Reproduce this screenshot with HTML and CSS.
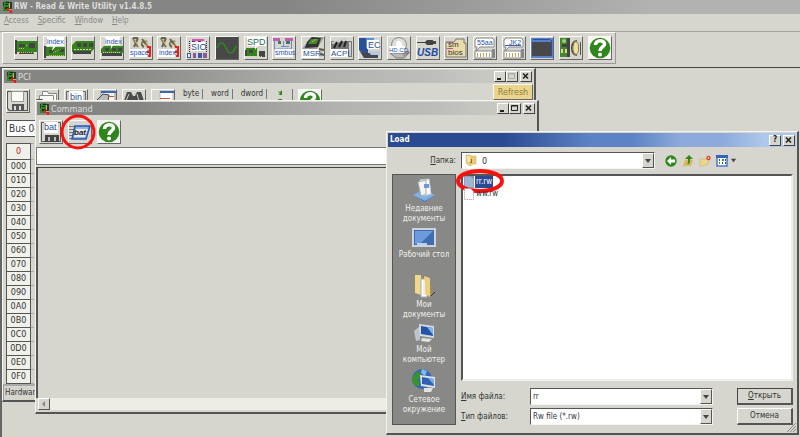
FILE: index.html
```html
<!DOCTYPE html>
<html lang="ru">
<head>
<meta charset="utf-8">
<title>RW - Read &amp; Write Utility v1.4.8.5</title>
<link rel="stylesheet" href="styles.css">
</head>
<body>
<svg class="defs" aria-hidden="true">
  <symbol id="app" viewBox="0 0 12 12"><path fill="#333" d="M1 1h9v9H1z"/><path fill="#2d8a1c" d="M2 0h5v6H2zM1 5h4v5H1z"/><path fill="#222" d="M4 1h3v1H4zM3 3h3v1H3zM3 6h2v2H3z"/><path fill="#c9b45c" d="M7 2h1v5H7zM5 8h5v1H5z"/><path fill="#e02018" d="M5 7h2v2h3v3H8v-2H5z"/></symbol>
  <symbol id="card" viewBox="0 0 22 22"><path fill="#33841c" d="M2 4h20v11H2z"/><path fill="#444" d="M0 3h2v14H0zM4 7h6v3H4zM14 6h6v5h-6zM4 15h15v2H4z"/><path stroke="#c9c060" stroke-dasharray="1 1" d="M4 15.500h15M11 8.500h2M4 11.500h6"/></symbol>
  <symbol id="cardidx" viewBox="0 0 22 22"><path fill="#33841c" d="M1 10h20v9H1z"/><path fill="#444" d="M0 9h2v12H0zM5 13h5v3H5zM15 12h5v3h-5z"/><path fill="#fff" d="M3 0h17v9h-8l-4 5 1-5H3z"/><path stroke="#c9c060" stroke-dasharray="1 1" d="M5 18.500h15M9 15.500l8-3"/><text x="3" y="7">index</text></symbol>
  <symbol id="mem" viewBox="0 0 22 22"><path fill="#33841c" d="M4 4h18v8l-3 3H0V8z"/><path fill="#444" d="M5 6h4v4H5zm6 0h4v4h-4zm6 0h4v4h-4zM1 14h18v3H1z"/><path stroke="#d9d5a0" stroke-dasharray="2 1" d="M2 12.500h17"/></symbol>
  <symbol id="memidx" viewBox="0 0 22 22"><path fill="#33841c" d="M3 9h19v7H0v-4z"/><path fill="#444" d="M4 11h4v3H4zm7 0h4v3h-4zm6 0h4v3h-4zM1 16h20v3H1z"/><path stroke="#d9d5a0" stroke-dasharray="1 1" d="M2 15.500h18"/><path fill="#fff" d="M4 0h15v8h-7l-2 4V8H4z"/><text x="4" y="7">index</text></symbol>
  <symbol id="iospace" viewBox="0 0 22 22"><path fill="none" stroke="#6a6550" stroke-width="2" d="M3 1l5 9M8 1l-4 9M3 1h5M12 2l6 8m-4 0a3 3 0 1 1 3-5"/><path fill="none" stroke="#d9c26a" d="M4 2l5 8M12 6l5 3M14 2l4 5"/><path fill="#fff" d="M0 12h17v8H0z"/><path fill="none" stroke="#e82018" stroke-width="2" d="M17 10h3v4l-3 1h3v4h-2"/><text x="0" y="18">space</text></symbol>
  <symbol id="ioindex" viewBox="0 0 22 22"><path fill="none" stroke="#6a6550" stroke-width="2" d="M3 1l5 9M8 1l-4 9M3 1h5M12 2l6 8m-4 0a3 3 0 1 1 3-5"/><path fill="none" stroke="#d9c26a" d="M4 2l5 8M12 6l5 3M14 2l4 5"/><path fill="#fff" d="M0 12h17v8H0z"/><path fill="none" stroke="#e82018" stroke-width="2" d="M17 10h3v4l-3 1h3v4h-2"/><text x="1" y="18">index</text></symbol>
  <symbol id="sio" viewBox="0 0 22 22"><path fill="#c85ab4" d="M5 2h12v2H5z"/><path fill="#6a2a50" d="M5 4h3v1H5zm6 0h3v1h-3z"/><path fill="#fff" d="M4 5h14v9H4z"/><path stroke="#333" stroke-dasharray="1 1" d="M2.500 4v11M19.500 4v11"/><path fill="#3c5aa8" d="M0 16h4v5H0zm11 0h4v5h-4z"/><path fill="#8a5a98" d="M6 16h3v5H6zm10 0h4v5h-4z"/><path fill="#eee" d="M1 17h2v3H1z"/><text class="big" x="4" y="13">SIO</text></symbol>
  <symbol id="wave" viewBox="0 0 22 22"><path fill="#484848" d="M0 0h22v22H0z"/><path fill="none" stroke="#2f8a22" stroke-width="1.500" d="M1 11C4 4 7 4 10 11s7 7 10-2"/></symbol>
  <symbol id="spd" viewBox="0 0 22 22"><path fill="#33841c" d="M1 11h11v8H1z"/><path fill="#444" d="M0 13h2v6H0zM4 13h4v3H4zM14 14h6v6h-6z"/><path stroke="#d9d5a0" stroke-dasharray="1 1" d="M2 19.500h16"/><path fill="#fff" d="M2 0h19v9h-9l-2 4V9H2z"/><text class="big green" x="2" y="8">SPD</text></symbol>
  <symbol id="smbus" viewBox="0 0 22 22"><path fill="#c85ab4" d="M0 1h7v3H0zm12 0h8v3h-8z"/><path fill="#3d7c58" d="M5 4h3v3H5zm8 0h4v3h-4z"/><path fill="none" stroke="#6c8ccc" d="M1.500 4v8h17V4M8 9.500h8M10.500 4v6"/><path fill="#fff" d="M2 12h18v8H2z"/><text x="2" y="18">smbus</text></symbol>
  <symbol id="msr" viewBox="0 0 22 22"><path fill="#999" d="M9 0h13l-7 12H0z"/><path fill="#333" d="M5 5l5-5 9 1-3 9-13 1z"/><path fill="#458c2c" d="M9 2h8l-3 5H6z"/><path stroke="#b4b060" d="M10 5l4-3M17 12l4 5"/><path fill="#fff" d="M0 12h17v9H0z"/><path stroke="#555" stroke-width="2" d="M17 12l5 1M18 17l4 1"/><text class="big sm" x="1" y="19">MSR</text></symbol>
  <symbol id="acpi" viewBox="0 0 22 22"><path fill="#777" d="M0 4h21v16H0z"/><path fill="#ccc" d="M1 5l13-4 2 3-15 3zM18 5h2v14h-2z"/><path stroke="#222" stroke-width="2" d="M3 11l3-6m2 5l3-6m2 6l2-6"/><path fill="#fff" d="M0 12h17v8H0z"/><text class="big sm" x="0" y="19">ACPI</text></symbol>
  <symbol id="ec" viewBox="0 0 22 22"><path fill="#2c5098" d="M0 1h9v18l-9-6z"/><path fill="#5e91d0" d="M7 1h8v10H7z"/><path fill="#434850" d="M0 13c4 4 10 3 19 3v5H5z"/><path fill="#fff" d="M8 3h12v9H8z"/><path fill="#b8c8db" d="M9 14h12v4H12z"/><text class="big" x="9" y="11">EC</text></symbol>
  <symbol id="hdcd" viewBox="0 0 22 22"><circle cx="11" cy="8" r="7.500" fill="#ddd" stroke="#888"/><circle cx="11" cy="7" r="3" fill="#fff"/><path fill="#bbb" stroke="#777" d="M2 16l6 5h8l5-5z"/><path fill="#fff" d="M1 9h16v7H1z"/><path stroke="#777" d="M14 17l7-3m-6 5l7-4"/><text class="tinyt" x="1" y="15">HD,CD</text></symbol>
  <symbol id="usb" viewBox="0 0 22 22"><path fill="#444" d="M0 5h8l2-2h6v1h3v3h-3v1h-6L8 6H0z"/><text class="usbt" x="0" y="19">USB</text></symbol>
  <symbol id="smbios" viewBox="0 0 22 22"><path fill="#e9dca9" stroke="#777" d="M1 5h8l2-3h8v4h2v14H1z"/><path stroke="#b5588f" d="M2 5.500h6M2 11.500h6"/><text class="blk" x="3" y="10">sm</text><text class="blk" x="3" y="18">bios</text></symbol>
  <symbol id="s55" viewBox="0 0 22 22"><path fill="#fff" stroke="#888" d="M3 1h15l2 2v7H6l-4 4 1-4H1V3z"/><path fill="#fff" stroke="#888" d="M1 14h17v7H1z"/><path stroke="#bba55c" stroke-width="4" stroke-dasharray="1 2" d="M3 18h15"/><path fill="#888" d="M18 12h3v9h-3z"/><text x="3" y="8">55aa</text></symbol>
  <symbol id="s12" viewBox="0 0 22 22"><path fill="#fff" stroke="#888" d="M3 1h15l2 2v7H6l-4 4 1-4H1V3z"/><path fill="#fff" stroke="#888" d="M1 14h17v7H1z"/><path stroke="#bba55c" stroke-width="4" stroke-dasharray="1 2" d="M3 18h15"/><path fill="#888" d="M18 12h3v9h-3z"/><path stroke="#3c62b0" d="M2 8.500h16"/><text x="6" y="8">JK2</text></symbol>
  <symbol id="screen" viewBox="0 0 22 22"><path fill="#5481ca" d="M0 1h22v20H0z"/><path fill="#2c50a0" d="M2 2h17v1H2zm18 1h1v16h-1z"/><path fill="#484848" d="M1 5h19v14H1z"/></symbol>
  <symbol id="board" viewBox="0 0 22 22"><path fill="#45872c" d="M0 1h7v19H0z"/><path fill="#444" d="M7 1h3v19H7zM2 7h5v3H2z"/><path fill="#ded586" d="M1 12h2v4H1zm4 0h2v4H5z"/><circle cx="4" cy="4" r="2" fill="#9ed080"/><path fill="none" stroke="#444" stroke-width="1.500" d="M17 4c-7-1-7 15 0 14"/><path fill="#eee1a0" stroke="#8c7b3f" d="M14.500 5c3-1 4 1 4 6s-1 7-4 6c-2-4-2-8 0-12z"/><path stroke="#555" d="M20.500 5v13"/></symbol>
  <symbol id="help" viewBox="0 0 22 22"><path fill="#f5f5f2" d="M0 0h22v22H0z"/><circle cx="11" cy="11" r="10.300" fill="#2f861c"/><path fill="none" stroke="#fff" stroke-width="3.600" d="M6.500 8c0-5.500 9-5.500 9-1 0 3-4.500 3-4.500 7"/><circle cx="11" cy="17.500" r="2" fill="#fff"/></symbol>
  <symbol id="disk" viewBox="0 0 22 22"><path fill="#555" d="M0 1h21v20H2l-2-2z"/><path fill="#d7d7cf" d="M1 2h19v18H3l-2-2z"/><path fill="#fafaf8" stroke="#999" d="M4.500 1.500h12v10h-12z"/><path fill="#555" d="M5 14h12v7H5z"/><path fill="#ddd" d="M7 16h2v4H7zm5 0h2v4h-2z"/></symbol>
  <symbol id="folders" viewBox="0 0 22 22"><path fill="#f8f8f5" stroke="#888" d="M6.500 1.500h5l1 2h8v12h-14z"/><path fill="#f8f8f5" stroke="#888" d="M3.500 5.500h14v13h-14z"/><path fill="#e4e4de" stroke="#555" d="M.500 9.500h6l1 2h7v9h-14z"/></symbol>
  <symbol id="bin" viewBox="0 0 22 22"><path fill="#ccc" stroke="#666" d="M1.500 1.500h19v19h-19z"/><path fill="#fff" d="M4 1h14v11H4z"/><text class="big" x="5" y="10">bin</text></symbol>
  <symbol id="bat" viewBox="0 0 22 22"><path fill="#d7d7cf" stroke="#555" d="M1.500 1.500h19v19h-19z"/><path fill="#fff" d="M4 1h14v11H4z"/><path fill="#444" d="M5 14h14v7H5z"/><path fill="#bbb" d="M8 16h2v4H8zm6 0h2v4h-2z"/><text class="big" x="4" y="9">bat</text></symbol>
  <symbol id="probe" viewBox="0 0 22 22"><path fill="#f5f5f5" stroke="#999" d="M7 1h14v16H7z"/><path fill="#3c65b4" d="M7 1h15v2H7z"/><path fill="#bbb" stroke="#444" d="M1 12l8-8 6 1-1 6-4 1-4-1-4 5z"/><path stroke="#bf5a30" d="M15 6.500h5"/></symbol>
  <symbol id="find" viewBox="0 0 22 22"><path fill="#4b4b4b" d="M4 2h4l2 4h2l2-4h4l4 12h-9v-3h-4v3H0z"/><path stroke="#ccc" d="M6 4l-3 7M14 4l2 7"/></symbol>
  <symbol id="split" viewBox="0 0 22 22"><path fill="#fff" stroke="#bbb" d="M8 1h13v18H8z"/><path fill="#3c65b4" d="M8 1h14v2H8zM0 10h20v2H0z"/><path stroke="#bf5a30" d="M8 8.500h10"/></symbol>
  <symbol id="run" viewBox="0 0 22 22"><path stroke="#777" d="M0 5.500h6M0 8.500h5M0 11.500h5M0 14.500h4M0 17.500h6"/><path fill="#93b4e3" stroke="#2d57a4" stroke-width="1.500" d="M6 5h15l-4 13H3z"/><path fill="#e7ecf4" d="M7 8h12l-3 8H5z"/><text class="runt" x="5" y="14">bat</text></symbol>
  <symbol id="docs" viewBox="0 0 24 24"><path fill="#7fb0e8" d="M1 17l9-5 13 5-10 7z"/><path fill="#3e70b8" d="M1 17l12 6 10-6-10 7z"/><path fill="#fafafa" stroke="#c4cfdd" d="M8 2l9-1 2 15-9 2z"/><path fill="#f2f4f8" stroke="#aaa" d="M6 4l8-2v14l-5 2z"/><path fill="#6a9bd8" d="M12 6h5v4h-5z"/></symbol>
  <symbol id="desk" viewBox="0 0 24 20"><path fill="#416caf" stroke="#ccd4da" stroke-width="2" d="M1 1h22v17H1z"/><path fill="#6c9ade" d="M3 3h18L8 16H3z"/><path fill="#b5d2f4" d="M5 15h10v2H5z"/></symbol>
  <symbol id="mydocs" viewBox="0 0 24 24"><path fill="#b59035" d="M17 3l3 17-5 3z"/><path fill="#f0d88a" d="M3 1h6v20l-6-2z"/><path fill="#fff" stroke="#aaa" d="M9 5h6v18H9z"/><path fill="#ecd081" d="M12 2l6 2v19l-5-3z"/><path stroke="#eee" stroke-width="2" d="M12 7v14"/><path stroke="#333" d="M19 22l4-4"/></symbol>
  <symbol id="pc" viewBox="0 0 24 20"><path fill="#bcc4cc" d="M2 8l6-5v14l-4 1z"/><path fill="#d4dbe4" d="M7 1l15 2v12L8 13z"/><path fill="#2452a4" d="M9 3l12 2v8L9 11z"/><path fill="#7eb4ef" d="M15 4l6 1v7z"/><path fill="#e3e3e0" d="M10 15l10 1-3 3-8-1z"/></symbol>
  <symbol id="net" viewBox="0 0 24 24"><circle cx="10" cy="10" r="10" fill="#3569b8"/><path fill="#37942b" d="M1 7l5-5 3 4-3 5 2 4-4 3-4-6z"/><path fill="#83b9eb" d="M10 0l5 2-2 5-4-3z"/><path fill="#dce4eb" d="M8 6l15 2v11L9 17z"/><path fill="#2e61b3" d="M10 8l12 2v7l-12-2z"/><path fill="#79aeea" d="M16 9l6 1v6z"/><path fill="#e3e3e0" d="M12 19h9l-2 4h-7z"/></symbol>
  <symbol id="folder" viewBox="0 0 12 12"><path fill="#e9cc79" stroke="#c9a850" stroke-width=".5" d="M1 1h4l1 1h5v8H8l-3 2-4-3z"/><path fill="#f5e5aa" d="M2 2h3v6H2z"/><path fill="#8f6b1c" d="M6 5h1v4H5V8h1z"/></symbol>
  <symbol id="back" viewBox="0 0 12 12"><circle cx="6" cy="6" r="5.700" fill="#2f861c"/><path fill="#fff" d="M2 6l4-4v2.500h4v3H6V10z"/></symbol>
  <symbol id="up" viewBox="0 0 12 12"><path fill="#ecd58c" d="M1 4h10L9 11H1z"/><path fill="#bd9b46" d="M1 11l2-6h8l-2 6z" opacity=".5"/><path fill="#2f861c" d="M7 0l4 4H8c0 4 0 5-3 5 2-2 1-3 1-5H3z"/></symbol>
  <symbol id="newf" viewBox="0 0 12 12"><path fill="#ecd58c" stroke="#c7aa60" stroke-width=".5" d="M1 4h9l-1 5-6 2H1z"/><circle cx="9.500" cy="3" r="2.200" fill="#d44a24"/><circle cx="9.500" cy="3" r=".8" fill="#fff"/></symbol>
  <symbol id="views" viewBox="0 0 12 12"><path fill="#fff" stroke="#4d7acb" stroke-width="1.500" d="M1 1h10v10H1z"/><path fill="#3764bd" d="M0 0h12v3H0z"/><path fill="#37942b" d="M6 4h2v2H6zM3 7h1v2H3z"/><path fill="#2b4f9d" d="M3 4h1v2H3zm6 0h1v2H9zM6 7h1v2H6zm3 0h1v2H9z"/></symbol>
  <symbol id="file" viewBox="0 0 10 12"><path fill="#fff" stroke="#999" stroke-dasharray="1 1" d="M.5.500h6l3 3v8h-9z"/></symbol>
  <symbol id="min" viewBox="0 0 10 9"><path fill="#222" d="M2 6h4v2H2z"/></symbol>
  <symbol id="max" viewBox="0 0 10 9"><path fill="none" stroke="currentColor" d="M1.500 1.500h6v5h-6zM1 2h7"/></symbol>
  <symbol id="close" viewBox="0 0 10 9"><path stroke="#222" stroke-width="1.600" d="M2 1.500l5 5M7 1.500l-5 5"/></symbol>
  <symbol id="arrow" viewBox="0 0 8 8"><path fill="#444" d="M1 2h6L4 6z"/></symbol>
</svg>

<header class="titlebar main-title"><svg class="appicon"><use href="#app"/></svg><h1>RW - Read &amp; Write Utility v1.4.8.5</h1></header>
<nav class="menu"><a href="#"><u>A</u>ccess</a><a href="#"><u>S</u>pecific</a><a href="#"><u>W</u>indow</a><a href="#"><u>H</u>elp</a></nav>
<div class="toolrow">
  <div class="toolbar">
    <button aria-label="PCI"><svg><use href="#card"/></svg></button>
    <button aria-label="PCI index"><svg><use href="#cardidx"/></svg></button>
    <button aria-label="Memory"><svg><use href="#mem"/></svg></button>
    <button aria-label="Memory index"><svg><use href="#memidx"/></svg></button>
    <button aria-label="IO space"><svg><use href="#iospace"/></svg></button>
    <button aria-label="IO index"><svg><use href="#ioindex"/></svg></button>
    <button aria-label="Super IO"><svg><use href="#sio"/></svg></button>
    <button aria-label="Clock"><svg><use href="#wave"/></svg></button>
    <button aria-label="SPD"><svg><use href="#spd"/></svg></button>
    <button aria-label="SMBus"><svg><use href="#smbus"/></svg></button>
    <button aria-label="MSR"><svg><use href="#msr"/></svg></button>
    <button aria-label="ACPI"><svg><use href="#acpi"/></svg></button>
    <button aria-label="EC"><svg><use href="#ec"/></svg></button>
    <button aria-label="Drives"><svg><use href="#hdcd"/></svg></button>
    <button aria-label="USB"><svg><use href="#usb"/></svg></button>
    <button aria-label="SMBIOS"><svg><use href="#smbios"/></svg></button>
    <button aria-label="Boot sector"><svg><use href="#s55"/></svg></button>
    <button aria-label="Strings"><svg><use href="#s12"/></svg></button>
    <button aria-label="Command"><svg><use href="#screen"/></svg></button>
    <button aria-label="Remote"><svg><use href="#board"/></svg></button>
    <button aria-label="Help"><svg><use href="#help"/></svg></button>
  </div>
</div>

<main class="desktop">
  <section class="window pci">
    <div class="titlebar"><svg class="appicon"><use href="#app"/></svg><h2>PCI</h2>
      <div class="caps"><button aria-label="Minimize"><svg><use href="#min"/></svg></button><button class="off" aria-label="Maximize"><svg><use href="#max"/></svg></button><button class="x" aria-label="Close"><svg><use href="#close"/></svg></button></div></div>
    <div class="tools">
      <button aria-label="Save"><svg><use href="#disk"/></svg></button>
      <button aria-label="Open"><svg><use href="#folders"/></svg></button>
      <button aria-label="Binary"><svg><use href="#bin"/></svg></button>
      <button aria-label="Edit"><svg><use href="#probe"/></svg></button>
      <button aria-label="Find"><svg><use href="#find"/></svg></button>
      <button aria-label="Split"><svg><use href="#split"/></svg></button>
      <button class="word">byte</button><button class="word">word</button><button class="word">dword</button>
      <button class="swap" aria-label="Swap"><svg viewBox="0 0 12 24"><path fill="#2f861c" d="M2 2l2 1 2-2v5H2l2-1zM2 10h4v2l1 2H1l2-2z"/></svg></button>
      <button aria-label="Help"><svg><use href="#help"/></svg></button>
      <button class="refresh">Refresh</button>
    </div>
    <select class="bus" aria-label="Bus"><option>Bus 04</option></select>
    <table class="regs">
      <thead><tr><th class="red">0</th><td></td></tr></thead>
      <tbody>
      <tr><th>000</th><td></td></tr><tr><th>010</th><td></td></tr><tr><th>020</th><td></td></tr><tr><th>030</th><td></td></tr>
      <tr><th>040</th><td></td></tr><tr><th>050</th><td></td></tr><tr><th>060</th><td></td></tr><tr><th>070</th><td></td></tr>
      <tr><th>080</th><td></td></tr><tr><th>090</th><td></td></tr><tr><th>0A0</th><td></td></tr><tr><th>0B0</th><td></td></tr>
      <tr><th>0C0</th><td></td></tr><tr><th>0D0</th><td></td></tr><tr><th>0E0</th><td></td></tr><tr><th>0F0</th><td></td></tr>
      </tbody>
    </table>
    <footer>Hardware</footer>
  </section>

  <section class="window command">
    <div class="titlebar"><svg class="appicon"><use href="#app"/></svg><h2>Command</h2>
      <div class="caps"><button aria-label="Minimize"><svg><use href="#min"/></svg></button><button aria-label="Maximize"><svg><use href="#max"/></svg></button><button class="x" aria-label="Close"><svg><use href="#close"/></svg></button></div></div>
    <div class="tools">
      <button aria-label="Save batch"><svg><use href="#bat"/></svg></button>
      <button class="marked" aria-label="Load batch"><svg><use href="#run"/></svg><svg class="ring" viewBox="0 0 38 38"><ellipse cx="19" cy="19" rx="16" ry="16"/></svg></button>
      <button aria-label="Help"><svg><use href="#help"/></svg></button>
    </div>
    <input class="cmdline" type="text" aria-label="Command">
    <div class="output"></div>
    <div class="scroll"><button aria-label="Scroll left"><svg viewBox="0 0 8 8"><path fill="#888" d="M5 1v6L2 4z"/></svg></button></div>
  </section>

  <form class="window dialog">
    <div class="titlebar"><h2>Load</h2><div class="caps"><button type="button" aria-label="Help">?</button><button type="button" class="x" aria-label="Close"><svg><use href="#close"/></svg></button></div></div>
    <div class="lookin">
      <label for="folder-sel"><u>П</u>апка:</label>
      <div class="combo"><svg class="lead"><use href="#folder"/></svg><select id="folder-sel"><option>0</option></select><span class="drop"><svg><use href="#arrow"/></svg></span></div>
      <button type="button" aria-label="Back"><svg><use href="#back"/></svg></button>
      <button type="button" aria-label="Up"><svg><use href="#up"/></svg></button>
      <button type="button" aria-label="New folder"><svg><use href="#newf"/></svg></button>
      <button type="button" class="views" aria-label="Views"><svg><use href="#views"/></svg><svg class="tiny"><use href="#arrow"/></svg></button>
    </div>
    <div class="body">
      <nav class="places">
        <a href="#"><svg><use href="#docs"/></svg><span>Недавние<br>документы</span></a>
        <a href="#" class="single"><svg class="low"><use href="#desk"/></svg><span>Рабочий стол</span></a>
        <a href="#"><svg><use href="#mydocs"/></svg><span>Мои<br>документы</span></a>
        <a href="#"><svg class="low"><use href="#pc"/></svg><span>Мой<br>компьютер</span></a>
        <a href="#"><svg><use href="#net"/></svg><span>Сетевое<br>окружение</span></a>
      </nav>
      <div class="right">
        <ul class="files">
          <li class="selected"><svg><use href="#file"/></svg><span>rr.rw</span><svg class="ring" viewBox="0 0 50 26"><ellipse cx="25" cy="13" rx="22" ry="10"/></svg></li>
          <li><svg><use href="#file"/></svg><span>ww.rw</span></li>
        </ul>
        <div class="fields">
          <label for="fname"><u>И</u>мя файла:</label>
          <div class="combo"><input id="fname" type="text" value="rr"><button type="button" class="drop" aria-label="Show names"><svg><use href="#arrow"/></svg></button></div>
          <button type="button" class="push default"><span><u>О</u>ткрыть</span></button>
          <label for="ftype"><u>Т</u>ип файлов:</label>
          <div class="combo"><select id="ftype"><option>Rw file (*.rw)</option></select><span class="drop"><svg><use href="#arrow"/></svg></span></div>
          <button type="button" class="push">Отмена</button>
        </div>
      </div>
    </div>
    <svg class="grip" viewBox="0 0 9 9"><path stroke="#888" d="M0 9l9-9M3 9l6-6M6 9l3-3"/></svg>
  </form>
</main>
</body>
</html>
```
FILE: styles.css
```css
* { box-sizing: border-box; }
html, body { height: 100%; }
body {
  margin: 0;
  display: flex;
  flex-direction: column;
  overflow: hidden;
  background: #d6d6ce;
  color: #333;
  font: 8px/10px "DejaVu Sans Condensed", "DejaVu Sans", sans-serif;
}
h1, h2 { margin: 0; font-size: 9px; line-height: 12px; font-weight: normal; }
button, select, input { font: inherit; color: inherit; margin: 0; padding: 0; border-radius: 0; }
button { background: #d6d6ce; border: 0; display: flex; align-items: center; justify-content: center; }
a { color: inherit; text-decoration: none; }
svg { display: block; }
.defs { display: none; }
symbol text { font: 7px "Liberation Sans", sans-serif; fill: #2454b4; }
symbol text.big { font-size: 9px; fill: #2c4f94; }
symbol text.sm { font-size: 8px; }
symbol text.tinyt { font-size: 6px; }
symbol text.green { fill: #2c6a54; }
symbol text.usbt { font-size: 10px; font-style: italic; font-weight: bold; fill: #2449a0; }
symbol text.blk { font-size: 8px; fill: #333; }
symbol text.runt { font-size: 8px; font-style: italic; font-weight: bold; fill: #222; }

.titlebar {
  display: flex;
  align-items: center;
  height: 13px;
  padding: 0 1px 0 2px;
  color: #dededa;
  background: linear-gradient(90deg, #858583 20%, #b2b2b0 60%, #bdbdba 80%, #d0d0ca);
}
.appicon { width: 12px; height: 12px; flex: none; }
.main-title { height: 14px; flex: none; background: linear-gradient(90deg, #858583 35%, #b2b2b0 82%); }
.main-title h1 { font-size: 8px; font-weight: bold; }
.menu { flex: none; display: flex; gap: 9px; height: 17px; padding: 0 4px; line-height: 14px; color: #888; }
.toolrow { flex: none; height: 36px; padding: 0 2px; border-top: 1px solid #a4a4a0; }
.toolbar {
  display: flex;
  justify-content: space-between;
  align-items: center;
  width: 614px;
  height: 32px;
  padding: 0 3px 0 11px;
  border: 1px solid #fff;
  border-right-color: #999;
  border-bottom-color: #999;
}
.toolbar button, .tools button {
  width: 24px;
  height: 24px;
  border: 1px solid #f8f8f4;
  border-right-color: #666;
  border-bottom-color: #666;
  flex: none;
}
.toolbar svg, .tools svg { width: 22px; height: 22px; }

.desktop { position: relative; flex: 1; border-top: 1px solid #444; border-left: 2px solid #666; }
.window {
  position: absolute;
  display: flex;
  flex-direction: column;
  background: #d6d6ce;
  border: 1px solid #f4f4f0;
  border-right: 2px solid #555;
  border-bottom: 2px solid #555;
}
.window > .titlebar { flex: none; margin: 1px; }
.caps { display: flex; margin-left: auto; }
.caps button {
  width: 12px;
  height: 11px;
  border: 1px solid #fff;
  border-right-color: #444;
  border-bottom-color: #444;
  color: #222;
  font-weight: bold;
}
.caps .x { margin-left: 2px; }
.caps .off { color: #aaa; }
.caps svg { width: 10px; height: 9px; }
.tools { display: flex; align-items: center; gap: 5px; padding: 2px 3px; flex: none; }

.pci { left: 0; top: 0; width: 534px; height: 334px; }
.pci .tools { height: 33px; padding-top: 3px; }
.tools .word { width: auto; border: 0; border-right: 1px solid #777; height: 10px; align-self: flex-start; margin-top: 2px; padding: 0 3px; }
.tools .swap { width: auto; border: 0; border-right: 1px solid #777; padding: 0 4px; }
.swap svg { width: 12px; height: 24px; }
.tools .refresh { width: 40px; height: 16px; align-self: flex-start; margin: -3px -2px 0 auto; background: #ebd48d; color: #8d8035; font-size: 9px; }
.bus { appearance: none; margin: 3px 3px 6px; height: 17px; padding: 0 2px; border: 1px solid #555; background: #fff; font-size: 10px; flex: none; }
.regs { border-collapse: collapse; margin-left: 3px; width: 60px; font-size: 9px; line-height: 13px; table-layout: fixed; }
.regs th { width: 24px; height: 14px; padding: 0; font-weight: normal; background: #f1f1ec; border: 1px solid #555; }
.regs .red { height: 16px; color: #c02020; }
.regs td { padding: 0; border-top: 1px dashed #aaa; border-bottom: 1px dashed #aaa; }
.pci footer { margin-top: auto; padding: 0 1px; height: 16px; line-height: 14px; border-top: 2px solid #aaa; border-left: 1px solid #999; }

.command { left: 33px; top: 32px; width: 504px; height: 314px; }
.command .tools { height: 31px; }
.marked { position: relative; }
.ring { position: absolute; fill: none; stroke: #fb1010; stroke-width: 4; }
.tools .marked .ring { left: -10px; top: -8px; width: 38px; height: 38px; }
.marked .ring { stroke-width: 3; }
.cmdline { flex: none; width: 100%; height: 18px; border: 1px solid #777; background: #fff; }
.output { flex: 1; margin-top: 2px; border-top: 1px solid #444; border-left: 2px solid #555; }
.scroll { flex: none; height: 12px; margin-left: 2px; margin-bottom: 2px; background: #eeece5; }
.scroll button { width: 12px; height: 12px; border: 1px solid #fff; border-right-color: #555; border-bottom-color: #555; }
.scroll svg { width: 8px; height: 8px; }

.dialog { left: 384px; top: 63px; width: 413px; height: 304px; }
.dialog > .titlebar { height: 14px; color: #fff; background: linear-gradient(90deg, #2a4a92 28%, #5c84c4 50%, #5c84c4 60%, #8eaadc 72%, #8eaadc 82%, #acc8ec 92%); }
.dialog > .titlebar h2 { font-weight: bold; font-size: 8px; }
.lookin { display: flex; align-items: center; gap: 5px; padding: 4px 60px 4px 5px; flex: none; height: 25px; }
.lookin label { width: 64px; text-align: right; flex: none; }
.lookin .combo { flex: 1; margin-right: 5px; }
.lookin select { font-size: 9px; }
.lookin button svg { width: 12px; height: 12px; }
.lookin .views .tiny { width: 7px; height: 7px; margin-left: 2px; }
.combo { position: relative; display: flex; height: 17px; background: #fff; border: 1px solid #555; border-right-color: #f4f4f0; border-bottom-color: #f4f4f0; }
.combo select, .combo input { appearance: none; flex: 1; min-width: 0; border: 0; background: transparent; padding: 0 2px; outline: 0; }
.lead { width: 12px; height: 12px; margin: 1px 3px; }
.drop { display: flex; align-items: center; justify-content: center; width: 12px; background: #d6d6ce; border: 1px solid #fff; border-right-color: #555; border-bottom-color: #555; pointer-events: none; }
.drop svg { width: 8px; height: 8px; }
.body { flex: 1; display: flex; gap: 5px; padding: 1px 4px 8px 5px; min-height: 0; }
.places { width: 64px; flex: none; display: flex; flex-direction: column; justify-content: space-between; background: #888886; color: #f0f0ec; border: 1px solid #555; padding: 3px 0 9px; text-align: center; white-space: nowrap; }
.places a { display: flex; flex-direction: column; align-items: center; gap: 2px; }
.places .single { min-height: 42px; }
.places svg { width: 24px; height: 24px; }
.places .low { height: 20px; }
.right { flex: 1; display: flex; flex-direction: column; gap: 7px; min-width: 0; }
.files { flex: 1; margin: 0; padding: 0 1px; list-style: none; background: #fff; border: 2px solid #555; border-right-color: #eee; border-bottom-color: #eee; }
.files li { position: relative; display: flex; align-items: center; width: max-content; height: 12px; }
.files li > svg:first-child { width: 10px; height: 12px; margin-right: 1px; }
.files span { line-height: 12px; padding: 0 1px; }
.selected span { background: #2a4a92; color: #fff; }
.files .selected > svg:first-child { background: #5c7cb4; opacity: .8; }
.selected use { opacity: .3; }
.files .ring { left: -9px; top: -8px; width: 50px; height: 26px; }
.fields { display: grid; grid-template-columns: 65px 1fr 56px; column-gap: 4px; row-gap: 3px; align-items: center; }
.fields .combo { margin-right: 20px; }
.push { height: 17px; border: 1px solid #fff; border-right: 2px solid #555; border-bottom: 2px solid #555; }
.push.default { border-left-color: #444; border-top-color: #444; }
.grip { position: absolute; right: 1px; bottom: 1px; width: 9px; height: 9px; }
```
